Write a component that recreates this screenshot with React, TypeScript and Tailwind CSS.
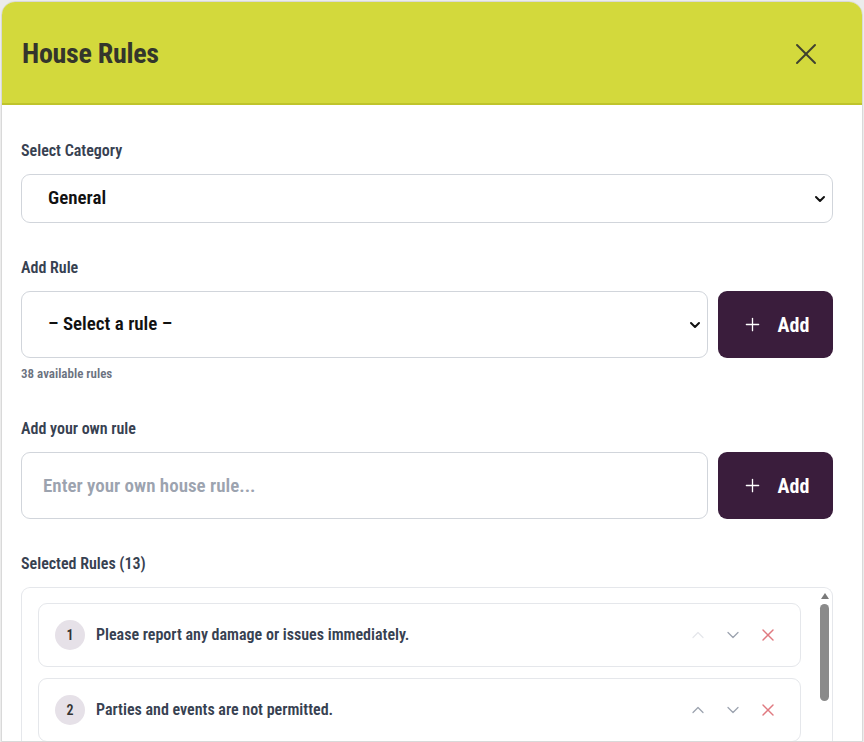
import { ChevronDown, ChevronUp, Plus, X } from 'lucide-react';

const rules = [
  'Please report any damage or issues immediately.',
  'Parties and events are not permitted.',
];

const font = { fontFamily: '"Roboto Condensed", Roboto, sans-serif' };

function AddButton() {
  return (
    <button className="flex h-[67px] w-[115px] items-center justify-center gap-[15px] rounded-[9px] bg-[#3a1d3c] text-white">
      <Plus className="h-[21px] w-[21px]" strokeWidth={1.5} />
      <span className="text-[20px] font-bold">Add</span>
    </button>
  );
}

export default function App() {
  return (
    <div className="h-[742px] w-[864px] overflow-hidden bg-[#ececec] pl-[1px] pt-[1px]" style={font}>
      <div className="flex h-[741px] w-[862px] flex-col overflow-hidden rounded-t-[14px] border border-[#d9d9d9] bg-white">
        {/* Header */}
        <div className="flex h-[103px] shrink-0 items-center justify-between border-b-2 border-[#bfc42c] bg-[#d3d93c] pl-[20px] pr-[38px] pt-[2px]">
          <h1 className="text-[28px] font-bold tracking-[-0.01em] text-[#34352c]">House Rules</h1>
          <X className="h-[36px] w-[36px] text-[#3f4130]" strokeWidth={1.3} />
        </div>

        {/* Body */}
        <div className="flex flex-1 flex-col pl-[19px] pt-[34px]">
          <label className="text-[16px] leading-[24px] font-semibold text-[#374151]">Select Category</label>
          <div className="mt-[11px] flex h-[49px] w-[812px] items-center justify-between rounded-[9px] border border-[#d1d5db] pl-[26px] pr-[4px]">
            <span className="text-[19px] font-semibold text-[#111]">General</span>
            <ChevronDown className="h-4 w-4 text-[#111]" strokeWidth={3} />
          </div>

          <label className="mt-[33px] text-[16px] leading-[24px] font-semibold text-[#374151]">Add Rule</label>
          <div className="mt-[11px] flex gap-[10px]">
            <div className="flex h-[67px] w-[687px] items-center justify-between rounded-[9px] border border-[#d1d5db] pl-[26px] pr-[4px]">
              <span className="text-[19px] font-semibold text-[#111]">– Select a rule –</span>
              <ChevronDown className="h-4 w-4 text-[#111]" strokeWidth={3} />
            </div>
            <AddButton />
          </div>
          <p className="mt-[7px] text-[13px] leading-[18px] font-semibold text-[#6b7280]">38 available rules</p>

          <label className="mt-[34px] text-[16px] leading-[24px] font-semibold text-[#374151]">Add your own rule</label>
          <div className="mt-[11px] flex gap-[10px]">
            <input
              placeholder="Enter your own house rule..."
              className="h-[67px] w-[687px] rounded-[9px] border border-[#d1d5db] pl-[21px] text-[19px] font-semibold text-[#111] outline-none placeholder:text-[#9ca3af]"
              style={font}
            />
            <AddButton />
          </div>

          <label className="mt-[33px] text-[16px] leading-[24px] font-semibold text-[#374151]">Selected Rules (13)</label>
          <div className="mt-[11px] flex w-[812px] flex-1 gap-[17px] rounded-t-[9px] border border-b-0 border-[#e5e7eb] pl-[16px] pr-[1px] pt-[15px]">
            <div className="flex flex-1 flex-col gap-[11px]">
              {rules.map((rule, i) => (
                <div
                  key={rule}
                  className="flex h-[64px] shrink-0 items-center rounded-[9px] border border-[#e5e7eb] pl-[16px] pr-[22px]"
                >
                  <span className="flex h-[30px] w-[30px] items-center justify-center rounded-full bg-[#e6e1e8] text-[14px] font-semibold text-[#333]">
                    {i + 1}
                  </span>
                  <span className="ml-[11px] flex-1 text-[16px] font-semibold text-[#374151]">{rule}</span>
                  <div className="flex items-center gap-[15px]">
                    <ChevronUp className={`h-5 w-5 ${i === 0 ? 'text-[#e5e7eb]' : 'text-[#9ca3af]'}`} strokeWidth={1.5} />
                    <ChevronDown className="h-5 w-5 text-[#9ca3af]" strokeWidth={1.5} />
                    <X className="h-5 w-5 text-[#e07a80]" strokeWidth={1.7} />
                  </div>
                </div>
              ))}
            </div>
            {/* scrollbar */}
            <div className="flex w-[13px] flex-col items-center">
              <div className="-mt-[10px] h-0 w-0 border-x-[4px] border-b-[6px] border-x-transparent border-b-[#7a7a7a]" />
              <div className="mt-[5px] h-[97px] w-[9px] rounded-full bg-[#8a8a8a]" />
            </div>
          </div>
        </div>
      </div>
    </div>
  );
}
